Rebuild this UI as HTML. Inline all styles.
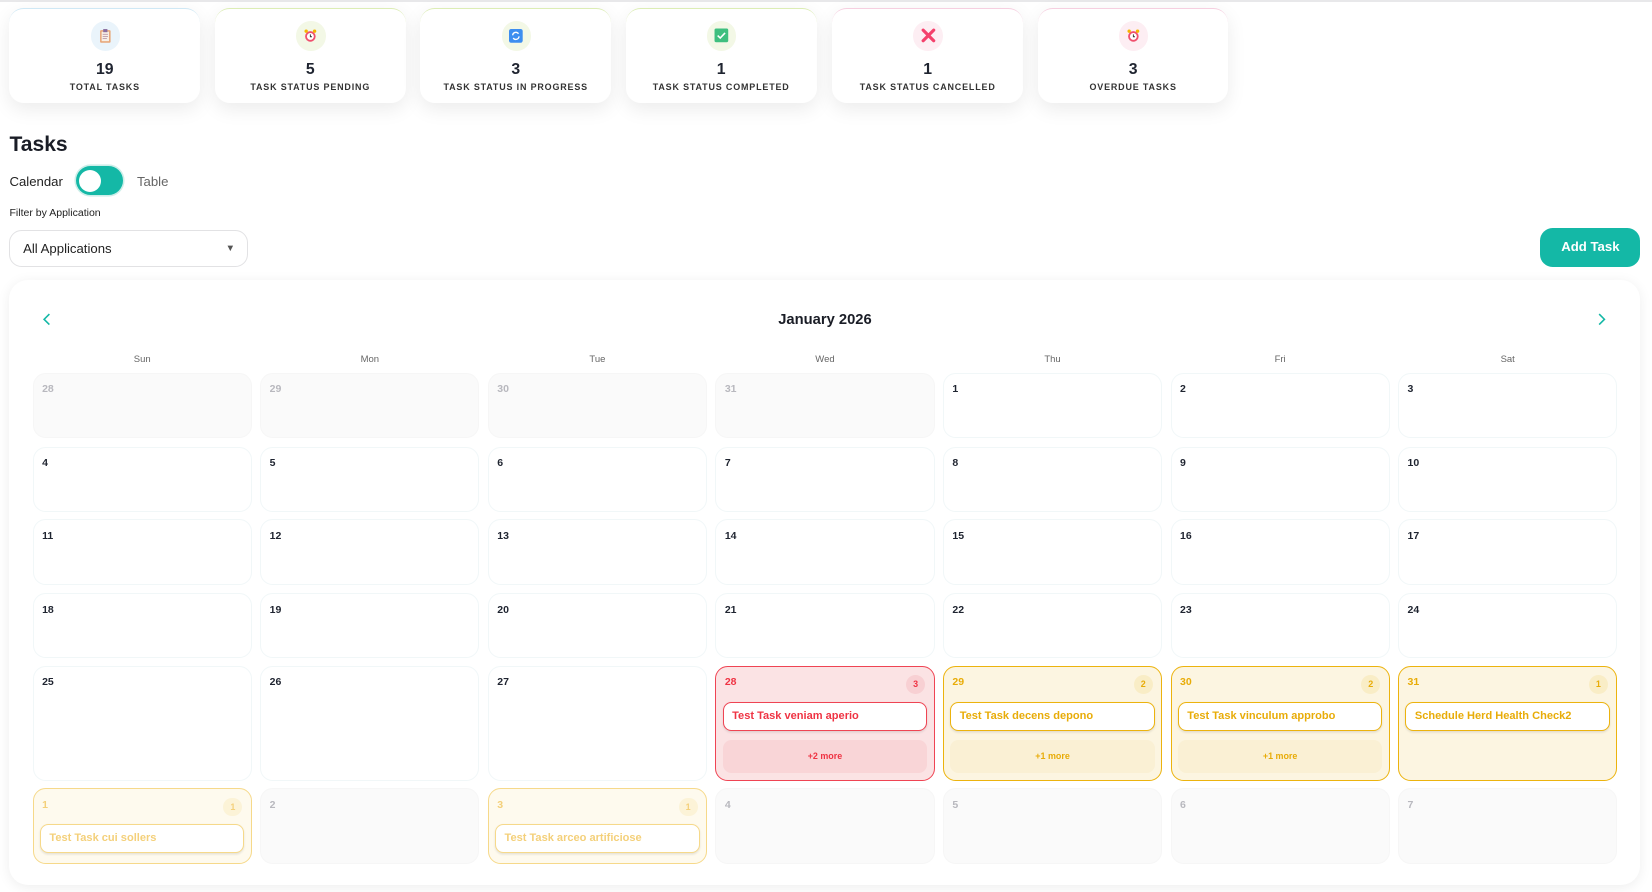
<!DOCTYPE html>
<html><head><meta charset="utf-8"><style>
*{box-sizing:border-box;margin:0;padding:0}
html,body{width:1652px;height:892px;overflow:hidden;background:#fff;font-family:"Liberation Sans",sans-serif;color:#1f2430}
#w{zoom:1.0536;position:relative;width:1568px;height:847px}
.topline{position:absolute;left:0;top:0;width:1568px;height:2px;background:#e8e8ea}
.card{position:absolute;top:8px;width:181px;height:90px;background:#fff;border-radius:14px;box-shadow:0 6px 18px rgba(0,0,0,.08);border-top:1px solid #cfe8f5;text-align:center}
.card .ic{position:absolute;left:77px;top:11px;width:28px;height:28px;border-radius:50%;display:flex;align-items:center;justify-content:center}
.card .n{position:absolute;top:49px;left:0;right:0;font-size:15px;font-weight:bold}
.card .l{position:absolute;top:69px;left:0;right:0;font-size:8.5px;font-weight:bold;letter-spacing:.8px;color:#333}
.abs{position:absolute}
.cal{position:absolute;left:9px;top:266px;width:1548px;height:574px;background:#fff;border-radius:18px;box-shadow:0 2px 12px rgba(0,0,0,.07)}
.dn{position:absolute;top:336px;width:208px;text-align:center;font-size:9px;color:#666}
.c{position:absolute;width:208px;border:1px solid #f1f7f8;border-radius:12px;background:#fff}
.c .d{position:absolute;left:8px;top:9px;font-size:10px;font-weight:bold;color:#1f2430}
.c.o{background:#fafafa;border-color:#f6f6f6}.c.o .d{color:#b8b8be}
.c.r{background:#fbe3e4;border:1.3px solid #ef4453}.c.r .d,.c.r .b,.c.r .t,.c.r .m{color:#ef3343}
.c.y{background:#fcf5e1;border:1.3px solid #ecb30e}.c.y .d,.c.y .b,.c.y .t,.c.y .m{color:#e8ac08}
.c.f{background:#fefaee;border:1.3px solid #f6d98a}.c.f .d,.c.f .b,.c.f .t{color:#f4d07a}
.b{position:absolute;right:8px;top:8px;width:18px;height:18px;border-radius:50%;font-size:8.5px;font-weight:bold;text-align:center;line-height:18px}
.r .b{background:#f8d0d3}.y .b{background:#f9edc6}.f .b{background:#fcf3d7}
.t{position:absolute;left:6px;right:6px;top:33px;height:28px;background:#fff;border-radius:8px;font-size:10.5px;font-weight:bold;padding-left:8px;line-height:26px;box-shadow:0 1px 2px rgba(0,0,0,.1)}
.r .t{border:1.3px solid #ef4453}.y .t{border:1.3px solid #ecb30e}.f .t{border:1.3px solid #f6d98a}
.m{position:absolute;left:6px;right:6px;top:69px;height:32px;border-radius:8px;font-size:8.5px;font-weight:bold;text-align:center;line-height:32px}
.r .m{background:#f9d5d7}.y .m{background:#faf0d4}
</style></head><body><div id="w">
<div class="topline"></div>
<div class="card" style="left:9px"><div class="ic" style="background:#eaf4fb"><svg width="12" height="14"><rect x="1" y="2" width="10" height="12" rx="1" fill="#e8a77a"/><rect x="2.5" y="3.5" width="7" height="9" fill="#f7efe6"/><rect x="4" y="1" width="4" height="3" fill="#8a6d9e"/><path d="M3.5 6h5M3.5 8h5M3.5 10h4" stroke="#b9a" stroke-width=".8"/></svg></div><div class="n">19</div><div class="l">TOTAL TASKS</div></div>
<div class="card" style="left:204px;border-top-color:#dcedb5"><div class="ic" style="background:#f3f8e6"><svg width="14" height="14"><circle cx="7" cy="8" r="5" fill="#f0506e"/><circle cx="7" cy="8" r="3.3" fill="#fff"/><path d="M7 6v2.3h1.5" stroke="#333" stroke-width=".9" fill="none"/><circle cx="3" cy="3" r="1.6" fill="#f5b400"/><circle cx="11" cy="3" r="1.6" fill="#f5b400"/></svg></div><div class="n">5</div><div class="l">TASK STATUS PENDING</div></div>
<div class="card" style="left:399px;border-top-color:#dcedb5"><div class="ic" style="background:#f3f8e6"><svg width="13" height="13"><rect x="0" y="0" width="13" height="13" rx="2" fill="#3d8ef0"/><path d="M3.5 6a3 3 0 0 1 5.5-1.5M9.5 7a3 3 0 0 1-5.5 1.5" stroke="#fff" stroke-width="1.3" fill="none"/></svg></div><div class="n">3</div><div class="l">TASK STATUS IN PROGRESS</div></div>
<div class="card" style="left:594px;border-top-color:#dcedb5"><div class="ic" style="background:#f3f8e6"><svg width="14" height="14"><rect x="0.5" y="0.5" width="13" height="13" rx="1.5" fill="#3fbf7f"/><path d="M3.5 7.2l2.4 2.3 4.6-4.8" stroke="#fff" stroke-width="1.5" fill="none"/></svg></div><div class="n">1</div><div class="l">TASK STATUS COMPLETED</div></div>
<div class="card" style="left:790px;border-top-color:#f6cfe0"><div class="ic" style="background:#fdeef3"><svg width="16" height="16"><path d="M3 3l10 10M13 3L3 13" stroke="#f4416c" stroke-width="3" stroke-linecap="round"/></svg></div><div class="n">1</div><div class="l">TASK STATUS CANCELLED</div></div>
<div class="card" style="left:985px;border-top-color:#f6cfe0"><div class="ic" style="background:#fdeef3"><svg width="14" height="14"><circle cx="7" cy="8" r="5" fill="#f0506e"/><circle cx="7" cy="8" r="3.3" fill="#fff"/><path d="M7 6v2.3h1.5" stroke="#333" stroke-width=".9" fill="none"/><circle cx="3" cy="3" r="1.6" fill="#f5b400"/><circle cx="11" cy="3" r="1.6" fill="#f5b400"/></svg></div><div class="n">3</div><div class="l">OVERDUE TASKS</div></div>

<div class="abs" style="left:9px;top:126px;font-size:20px;font-weight:bold;color:#1a1d26">Tasks</div>
<div class="abs" style="left:9px;top:165px;font-size:12.5px;color:#222">Calendar</div>
<div class="abs" style="left:72px;top:158px;width:45px;height:27px;border-radius:14px;background:#14b8a6;box-shadow:0 0 0 1.5px #cdeee9"><div style="position:absolute;left:3px;top:3px;width:21px;height:21px;border-radius:50%;background:#fff"></div></div>
<div class="abs" style="left:130px;top:165px;font-size:12.5px;color:#666">Table</div>
<div class="abs" style="left:9px;top:196px;font-size:10px;color:#222">Filter by Application</div>
<div class="abs" style="left:9px;top:218px;width:226px;height:35px;border:1px solid #e2e2e4;border-radius:12px;font-size:12.5px;color:#222;padding:10px 0 0 12px">All Applications<span style="position:absolute;right:11px;top:12px;font-size:9px;color:#555">▼</span></div>
<div class="abs" style="left:1462px;top:216px;width:95px;height:37px;border-radius:12px;background:#14b8a6;color:#fff;font-size:12.5px;font-weight:bold;text-align:center;line-height:37px">Add Task</div>

<div class="cal"></div>
<svg class="abs" style="left:40px;top:297px" width="10" height="12"><path d="M7 1L2 6l5 5" stroke="#14b8a6" stroke-width="1.5" fill="none"/></svg>
<svg class="abs" style="left:1515px;top:297px" width="10" height="12"><path d="M3 1l5 5-5 5" stroke="#14b8a6" stroke-width="1.5" fill="none"/></svg>
<div class="abs" style="left:683px;top:296px;width:200px;text-align:center;font-size:14px;font-weight:bold;color:#1a1d26">January 2026</div>
<div class="dn" style="left:31px">Sun</div><div class="dn" style="left:247px">Mon</div><div class="dn" style="left:463px">Tue</div><div class="dn" style="left:679px">Wed</div><div class="dn" style="left:895px">Thu</div><div class="dn" style="left:1111px">Fri</div><div class="dn" style="left:1327px">Sat</div>

<div class="c o" style="left:31px;top:354px;height:62px"><span class="d">28</span></div>
<div class="c o" style="left:247px;top:354px;height:62px"><span class="d">29</span></div>
<div class="c o" style="left:463px;top:354px;height:62px"><span class="d">30</span></div>
<div class="c o" style="left:679px;top:354px;height:62px"><span class="d">31</span></div>
<div class="c" style="left:895px;top:354px;height:62px"><span class="d">1</span></div>
<div class="c" style="left:1111px;top:354px;height:62px"><span class="d">2</span></div>
<div class="c" style="left:1327px;top:354px;height:62px"><span class="d">3</span></div>
<div class="c" style="left:31px;top:424px;height:62px"><span class="d">4</span></div>
<div class="c" style="left:247px;top:424px;height:62px"><span class="d">5</span></div>
<div class="c" style="left:463px;top:424px;height:62px"><span class="d">6</span></div>
<div class="c" style="left:679px;top:424px;height:62px"><span class="d">7</span></div>
<div class="c" style="left:895px;top:424px;height:62px"><span class="d">8</span></div>
<div class="c" style="left:1111px;top:424px;height:62px"><span class="d">9</span></div>
<div class="c" style="left:1327px;top:424px;height:62px"><span class="d">10</span></div>
<div class="c" style="left:31px;top:493px;height:62px"><span class="d">11</span></div>
<div class="c" style="left:247px;top:493px;height:62px"><span class="d">12</span></div>
<div class="c" style="left:463px;top:493px;height:62px"><span class="d">13</span></div>
<div class="c" style="left:679px;top:493px;height:62px"><span class="d">14</span></div>
<div class="c" style="left:895px;top:493px;height:62px"><span class="d">15</span></div>
<div class="c" style="left:1111px;top:493px;height:62px"><span class="d">16</span></div>
<div class="c" style="left:1327px;top:493px;height:62px"><span class="d">17</span></div>
<div class="c" style="left:31px;top:563px;height:62px"><span class="d">18</span></div>
<div class="c" style="left:247px;top:563px;height:62px"><span class="d">19</span></div>
<div class="c" style="left:463px;top:563px;height:62px"><span class="d">20</span></div>
<div class="c" style="left:679px;top:563px;height:62px"><span class="d">21</span></div>
<div class="c" style="left:895px;top:563px;height:62px"><span class="d">22</span></div>
<div class="c" style="left:1111px;top:563px;height:62px"><span class="d">23</span></div>
<div class="c" style="left:1327px;top:563px;height:62px"><span class="d">24</span></div>
<div class="c" style="left:31px;top:632px;height:109px"><span class="d">25</span></div>
<div class="c" style="left:247px;top:632px;height:109px"><span class="d">26</span></div>
<div class="c" style="left:463px;top:632px;height:109px"><span class="d">27</span></div>
<div class="c r" style="left:679px;top:632px;height:109px"><span class="d">28</span><span class="b">3</span><div class="t">Test Task veniam aperio</div><div class="m">+2 more</div></div>
<div class="c y" style="left:895px;top:632px;height:109px"><span class="d">29</span><span class="b">2</span><div class="t">Test Task decens depono</div><div class="m">+1 more</div></div>
<div class="c y" style="left:1111px;top:632px;height:109px"><span class="d">30</span><span class="b">2</span><div class="t">Test Task vinculum approbo</div><div class="m">+1 more</div></div>
<div class="c y" style="left:1327px;top:632px;height:109px"><span class="d">31</span><span class="b">1</span><div class="t">Schedule Herd Health Check2</div></div>
<div class="c f" style="left:31px;top:748px;height:72px"><span class="d">1</span><span class="b">1</span><div class="t">Test Task cui sollers</div></div>
<div class="c o" style="left:247px;top:748px;height:72px"><span class="d">2</span></div>
<div class="c f" style="left:463px;top:748px;height:72px"><span class="d">3</span><span class="b">1</span><div class="t">Test Task arceo artificiose</div></div>
<div class="c o" style="left:679px;top:748px;height:72px"><span class="d">4</span></div>
<div class="c o" style="left:895px;top:748px;height:72px"><span class="d">5</span></div>
<div class="c o" style="left:1111px;top:748px;height:72px"><span class="d">6</span></div>
<div class="c o" style="left:1327px;top:748px;height:72px"><span class="d">7</span></div>
</div></body></html>
